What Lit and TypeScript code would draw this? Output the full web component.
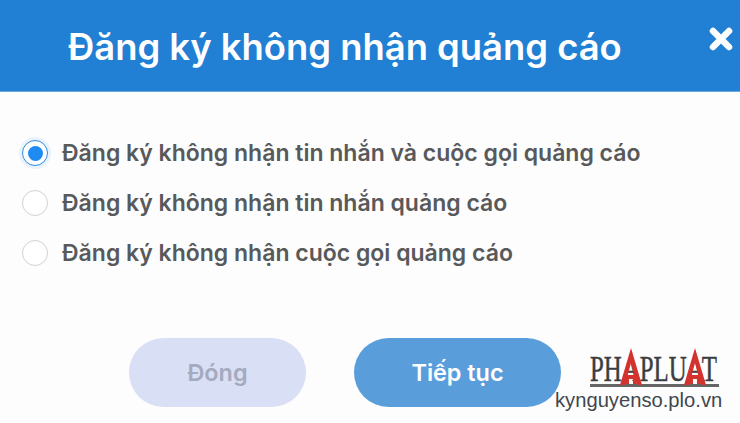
import { LitElement, html, css } from "lit";
import { customElement } from "lit/decorators.js";

const OPTIONS = [
  "Đăng ký không nhận tin nhắn và cuộc gọi quảng cáo",
  "Đăng ký không nhận tin nhắn quảng cáo",
  "Đăng ký không nhận cuộc gọi quảng cáo",
];

@customElement("app-root")
export class AppRoot extends LitElement {
  static styles = css`
    :host { display: block; width: 740px; height: 423px; overflow: hidden; position: relative; background: #fdfdfd; font-family: Inter, "Noto Sans", sans-serif; }
    .header { height: 91px; background: #2180d3; border-bottom: 1px solid #6ea9dd; display: flex; align-items: center; padding: 0 7px 0 68px; justify-content: space-between; }
    .title { color: #fff; font-size: 36.4px; font-weight: 600; white-space: nowrap; margin-top: 2px; }
    .close { width: 24px; height: 24px; margin-bottom: 14px; display: block; flex: none; }
    .options { display: flex; flex-direction: column; gap: 24px; padding: 48px 0 0 22px; }
    .option { display: flex; align-items: center; gap: 14px; height: 26px; }
    .radio { width: 26px; height: 26px; box-sizing: border-box; border-radius: 50%; border: 1.5px solid #d2d2d2; background: #fff; flex: none; }
    .radio.on { border: 1.5px solid #2b8ae0; box-shadow: 0 0 0 3px #e9f3fc; display: flex; align-items: center; justify-content: center; }
    .radio.on::after { content: ""; width: 15px; height: 15px; border-radius: 50%; background: #1f8bf2; }
    .label { font-size: 23px; font-weight: 600; color: #58595b; white-space: nowrap; }
    .actions { display: flex; gap: 48px; padding: 72px 0 0 129px; }
    .btn { height: 69px; border-radius: 35px; display: flex; align-items: center; justify-content: center; font-size: 23.4px; font-weight: 600; }
    .close-btn { width: 177px; background: #d9dff4; color: #a4aabf; }
    .next-btn { width: 207px; background: #5a9ddb; color: #fff; }
    .mark { position: absolute; left: 555px; top: 348px; width: 185px; }
    .logo { position: relative; margin-left: 35px; width: 129px; height: 39px; border-bottom: 3px solid #666; box-sizing: border-box; font-family: "Liberation Serif", serif; font-size: 36px; line-height: 42px; color: #3a3d42; white-space: nowrap; -webkit-text-stroke: 0.5px #3a3d42; }
    .logo span { display: inline-block; transform: scaleX(0.69); transform-origin: left; }
    .logo svg { position: absolute; top: 0; width: 22px; height: 37px; }
    .site { font-family: "Liberation Sans", Arial, sans-serif; font-size: 20.2px; line-height: 24px; color: #41474d; white-space: nowrap; margin-top: 1px; }
  `;

  private peak(left: number) {
    return html`<svg style="left:${left}px" viewBox="0 0 22 37">
      <path d="M11 0 L22 37 H17 L11 15 L5 37 H0 Z" fill="#d4322f"/>
      <path d="M6 27 H16 L17 36 H13 V31 H9 V36 H5 Z" fill="#d4322f"/>
    </svg>`;
  }

  render() {
    return html`
      <div class="header">
        <div class="title">Đăng ký không nhận quảng cáo</div>
        <svg class="close" viewBox="0 0 24 24" aria-hidden="true">
          <path d="M4 4 L20 20 M20 4 L4 20" stroke="#fff" stroke-width="6.5" stroke-linecap="round"/>
        </svg>
      </div>
      <div class="options">
        ${OPTIONS.map((o, i) => html`
          <div class="option">
            <div class="radio ${i === 0 ? "on" : ""}"></div>
            <div class="label">${o}</div>
          </div>`)}
      </div>
      <div class="actions">
        <div class="btn close-btn">Đóng</div>
        <div class="btn next-btn">Tiếp tục</div>
      </div>
      <div class="mark">
        <div class="logo"><span>PHAPLUAT</span>${this.peak(30)}${this.peak(94)}</div>
        <div class="site">kynguyenso.plo.vn</div>
      </div>
    `;
  }
}
